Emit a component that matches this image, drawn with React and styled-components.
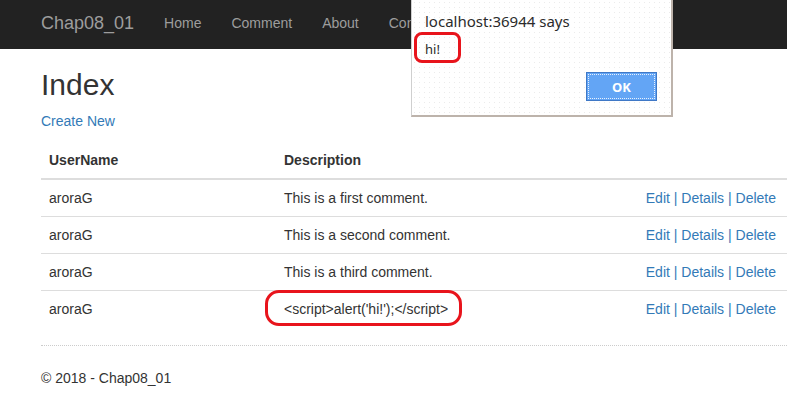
import React from "react";
import styled, { createGlobalStyle } from "styled-components";

const GlobalStyle = createGlobalStyle`
  html, body {
    margin: 0;
    padding: 0;
    background: #fff;
    overflow: hidden;
  }
  body {
    font-family: "Liberation Sans", Arial, sans-serif;
    font-size: 14px;
    line-height: 20px;
    color: #333;
  }
`;

const Navbar = styled.nav`
  height: 49px;
  background: #222;
  display: flex;
  align-items: center;
  padding-left: 26px;
  padding-bottom: 3px;
  box-sizing: border-box;
`;

const Brand = styled.a`
  font-size: 18px;
  line-height: 20px;
  color: #9d9d9d;
  padding: 15px;
  text-decoration: none;
`;

const NavLink = styled.a`
  color: #9d9d9d;
  padding: 15px;
  line-height: 20px;
  text-decoration: none;
`;

const Main = styled.main`
  padding: 0 0 0 41px;
`;

const Title = styled.h2`
  font-size: 30px;
  font-weight: 500;
  line-height: 33px;
  margin: 19px 0 10px;
`;

const Link = styled.a`
  color: #337ab7;
  text-decoration: none;
`;

const Para = styled.p`
  margin: 0 0 10px;
`;

const Table = styled.table`
  width: 100%;
  border-collapse: separate;
  border-spacing: 0;
  margin-bottom: 18px;
`;

const Th = styled.th`
  text-align: left;
  font-weight: bold;
  padding: 9px 8px 8px;
  border-bottom: 2px solid #ddd;
  width: ${(p) => p.$w || "auto"};
`;

const Row = styled.tr`
  & + & td {
    border-top: 1px solid #ddd;
  }
`;

const Td = styled.td`
  padding: 8px;
  vertical-align: top;
  text-align: ${(p) => (p.$right ? "right" : "left")};
  padding-right: ${(p) => (p.$right ? "11px" : "8px")};
`;

const Sep = styled.span`
  color: #337ab7;
`;

const Marked = styled.span`
  position: relative;
  &::after {
    content: "";
    position: absolute;
    left: -19px;
    right: -14px;
    top: -11px;
    bottom: -9px;
    border: 3px solid #e8141c;
    border-radius: 14px;
  }
`;

const Rule = styled.hr`
  border: 0;
  border-top: 1px dotted #ccc;
  margin: 0 0 22px;
`;

const Dialog = styled.div`
  position: fixed;
  left: 411px;
  top: 0;
  width: 259px;
  height: 115px;
  background-color: #fff;
  background-image: radial-gradient(#ebebeb 0.6px, transparent 0.8px);
  background-size: 5px 5px;
  border-left: 1px solid #cfcfcf;
  border-right: 2px solid #bdb3ab;
  border-bottom: 2px solid #bdb3ab;
  font-family: "Noto Sans", "Open Sans", sans-serif;
  color: #2b2b2b;
`;

const DialogTitle = styled.div`
  font-size: 15px;
  line-height: 20px;
  padding: 11px 0 0 13px;
`;

const Message = styled.div`
  position: relative;
  display: inline-block;
  font-size: 13px;
  line-height: 18px;
  margin: 9px 0 0 13px;
  &::after {
    content: "";
    position: absolute;
    left: -11px;
    top: -8px;
    width: 41px;
    height: 25px;
    border: 3px solid #e8141c;
    border-radius: 8px;
  }
`;

const Actions = styled.div`
  display: flex;
  justify-content: flex-end;
  padding: 13px 14px 0 0;
`;

const OkButton = styled.button`
  width: 71px;
  height: 29px;
  background: #63a5f5;
  border: 1px solid #3f78c6;
  outline: 1px dotted #e8f1fd;
  outline-offset: -3px;
  color: #fff;
  font-family: "Noto Sans", sans-serif;
  font-weight: bold;
  font-size: 13px;
`;

const rows = [
  "This is a first comment.",
  "This is a second comment.",
  "This is a third comment.",
];

const ActionLinks = () => (
  <>
    <Link href="#">Edit</Link> <Sep>|</Sep> <Link href="#">Details</Link>{" "}
    <Sep>|</Sep> <Link href="#">Delete</Link>
  </>
);

export default function App() {
  return (
    <>
      <GlobalStyle />
      <Navbar>
        <Brand href="#">Chap08_01</Brand>
        <NavLink href="#">Home</NavLink>
        <NavLink href="#">Comment</NavLink>
        <NavLink href="#">About</NavLink>
        <NavLink href="#">Contact</NavLink>
      </Navbar>
      <Main>
        <Title>Index</Title>
        <Para>
          <Link href="#">Create New</Link>
        </Para>
        <Table>
          <tbody>
            <tr>
              <Th $w="219px">UserName</Th>
              <Th>Description</Th>
              <Th />
            </tr>
            {rows.map((text) => (
              <Row key={text}>
                <Td>aroraG</Td>
                <Td>{text}</Td>
                <Td $right>
                  <ActionLinks />
                </Td>
              </Row>
            ))}
            <Row>
              <Td>aroraG</Td>
              <Td>
                <Marked>&lt;script&gt;alert('hi!');&lt;/script&gt;</Marked>
              </Td>
              <Td $right>
                <ActionLinks />
              </Td>
            </Row>
          </tbody>
        </Table>
        <Rule />
        <Para>© 2018 - Chap08_01</Para>
      </Main>
      <Dialog>
        <DialogTitle>localhost:36944 says</DialogTitle>
        <Message>hi!</Message>
        <Actions>
          <OkButton>OK</OkButton>
        </Actions>
      </Dialog>
    </>
  );
}
